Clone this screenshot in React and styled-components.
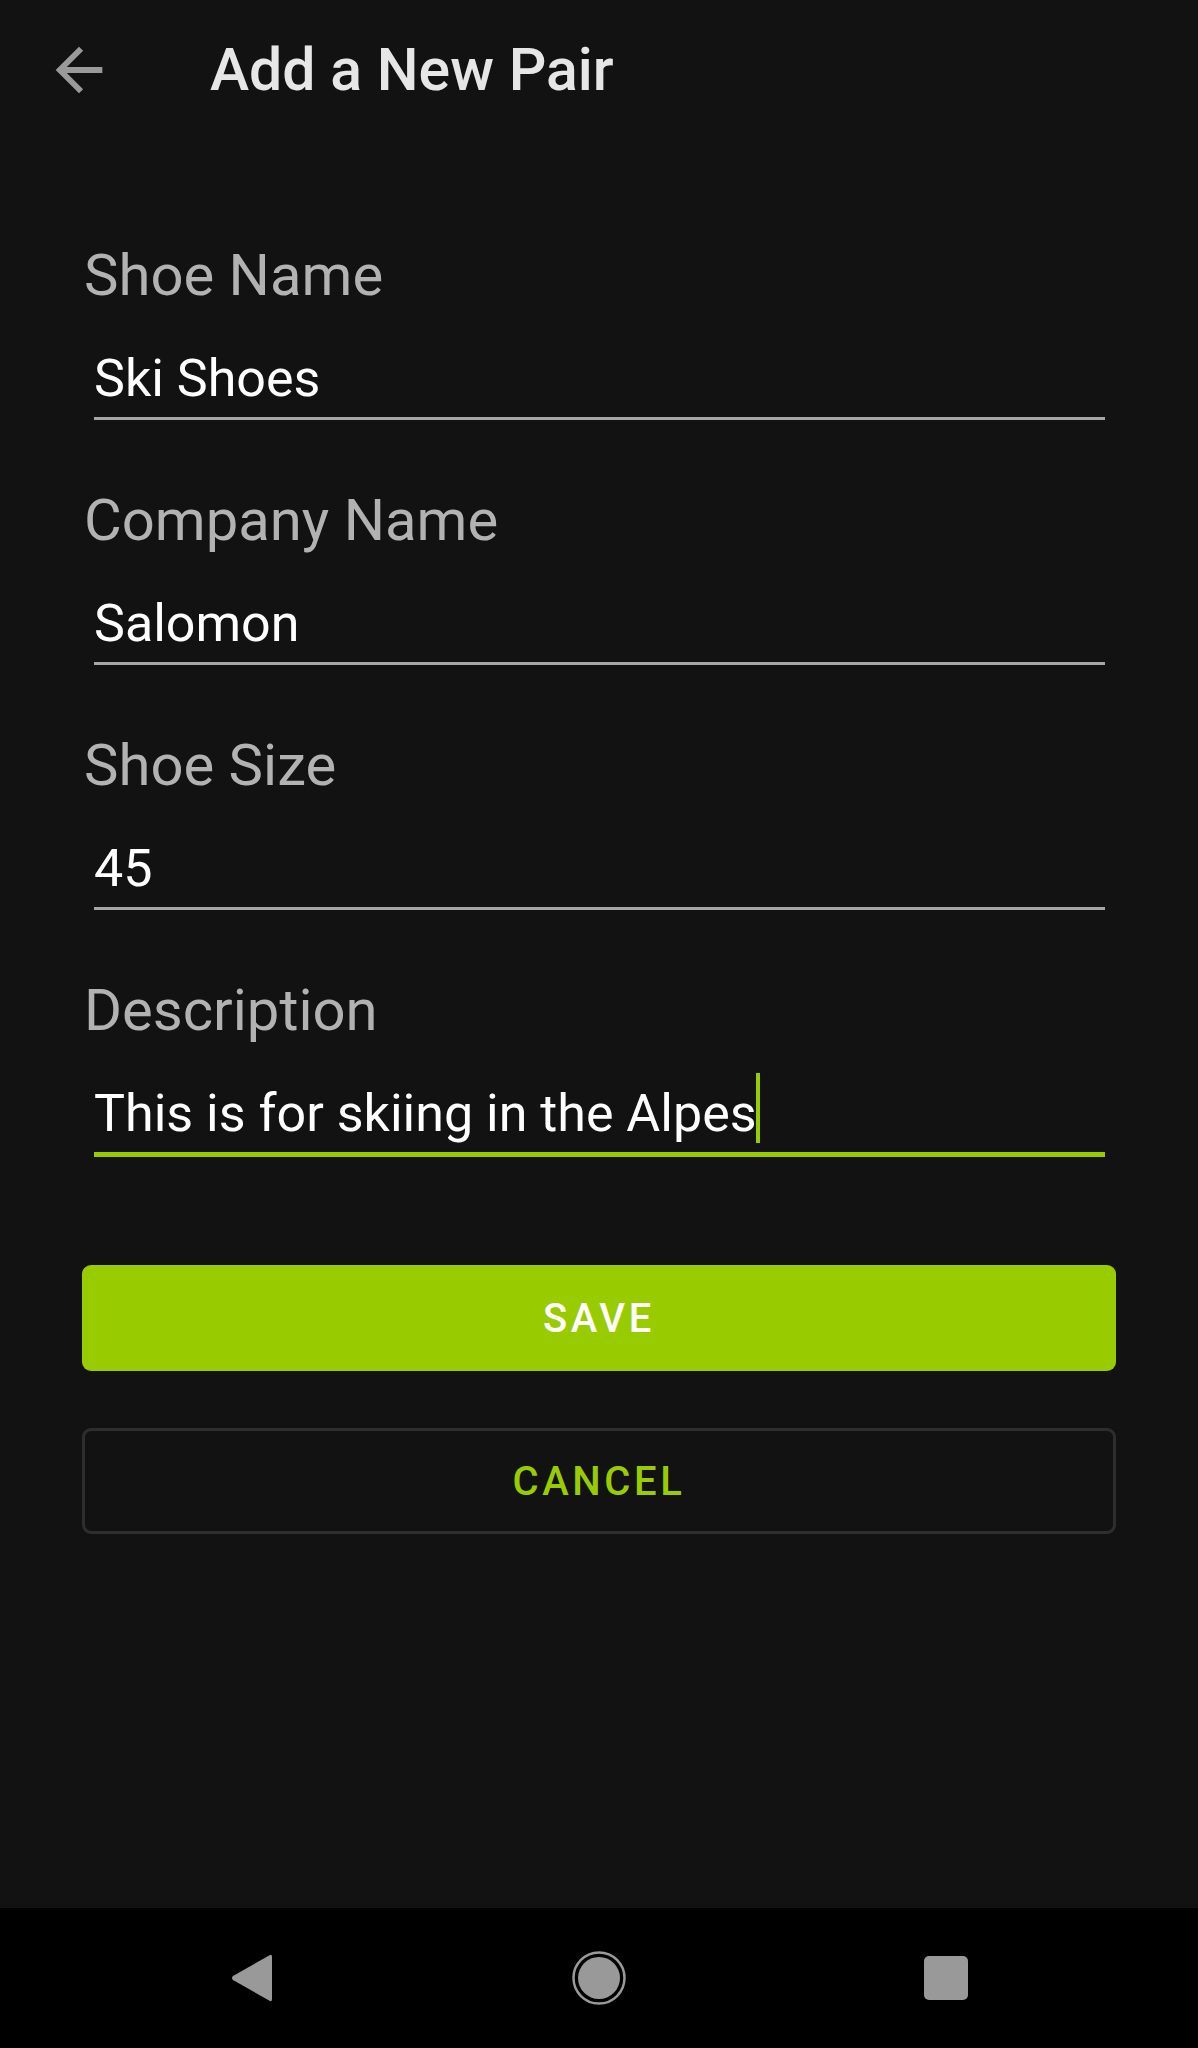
import React from "react";
import styled, { createGlobalStyle } from "styled-components";

const GlobalStyle = createGlobalStyle`
  html, body {
    margin: 0;
    padding: 0;
    background: #121212;
  }
  body {
    font-family: Roboto, "Liberation Sans", sans-serif;
  }
`;

const Screen = styled.div`
  min-height: 100vh;
  display: flex;
  flex-direction: column;
  background: #121212;
`;

const Toolbar = styled.header`
  height: 140px;
  display: flex;
  align-items: center;
  padding-left: 44px;
  gap: 96px;
`;

const BackButton = styled.button`
  width: 70px;
  height: 70px;
  padding: 0;
  border: 0;
  background: none;
  display: flex;
  svg {
    width: 70px;
    height: 70px;
    fill: #9a9a9a;
  }
`;

const Title = styled.h1`
  margin: 0;
  font-size: 59px;
  line-height: 68px;
  font-weight: 500;
  color: #e6e6e6;
`;

const Form = styled.form`
  display: flex;
  flex-direction: column;
  gap: 66px;
  padding: 101px 82px 0 82px;
`;

const Field = styled.div`
  display: flex;
  flex-direction: column;
`;

const Label = styled.label`
  font-size: 58px;
  line-height: 68px;
  color: #b2b2b2;
  margin-left: 2px;
`;

const Value = styled.div`
  margin: 39px 11px 0 12px;
  font-size: 52px;
  line-height: 61px;
  color: #ffffff;
  padding-bottom: 8px;
  border-bottom: ${(p) => (p.$focused ? "5px solid #99cc00" : "3px solid #a6a6a6")};
  white-space: nowrap;
`;

const Caret = styled.span`
  display: inline-block;
  width: 4px;
  height: 70px;
  margin-top: -10px;
  margin-left: -1px;
  vertical-align: -12px;
  background: #99cc00;
`;

const Actions = styled.div`
  display: flex;
  flex-direction: column;
  gap: 57px;
  padding: 108px 82px 0 82px;
`;

const Button = styled.button`
  height: 106px;
  border-radius: 9px;
  font-family: Roboto, "Liberation Sans", sans-serif;
  font-size: 40px;
  font-weight: 500;
  letter-spacing: 3.6px;
  text-transform: uppercase;
  background: ${(p) => (p.$primary ? "#99cc00" : "transparent")};
  color: ${(p) => (p.$primary ? "#ffffff" : "#99cc00")};
  border: ${(p) => (p.$primary ? "0" : "3px solid #2e2e2e")};
`;

const NavBar = styled.nav`
  margin-top: auto;
  height: 140px;
  background: #000;
  display: flex;
  align-items: center;
  justify-content: center;
  gap: 287px;
`;

const NavSlot = styled.div`
  width: 60px;
  height: 60px;
  display: flex;
  align-items: center;
  justify-content: center;
  svg {
    display: block;
  }
`;

function BackArrow() {
  return (
    <svg viewBox="0 0 24 24">
      <path d="M20 11H7.83l5.59-5.59L12 4l-8 8 8 8 1.41-1.41L7.83 13H20v-2z" />
    </svg>
  );
}

export default function App() {
  return (
    <Screen>
      <GlobalStyle />
      <Toolbar>
        <BackButton type="button" aria-label="Back">
          <BackArrow />
        </BackButton>
        <Title>Add a New Pair</Title>
      </Toolbar>

      <Form>
        <Field>
          <Label>Shoe Name</Label>
          <Value>Ski Shoes</Value>
        </Field>
        <Field>
          <Label>Company Name</Label>
          <Value>Salomon</Value>
        </Field>
        <Field>
          <Label>Shoe Size</Label>
          <Value>45</Value>
        </Field>
        <Field>
          <Label>Description</Label>
          <Value $focused>
            This is for skiing in the Alpes
            <Caret />
          </Value>
        </Field>
      </Form>

      <Actions>
        <Button type="button" $primary>Save</Button>
        <Button type="button">Cancel</Button>
      </Actions>

      <NavBar>
        <NavSlot>
          <svg width="44" height="50" viewBox="0 0 44 50">
            <path d="M40 2 Q42 1 42 4 L42 46 Q42 49 40 48 L3 27 Q1 25 3 23 Z" fill="#999" />
          </svg>
        </NavSlot>
        <NavSlot>
          <svg width="56" height="56" viewBox="0 0 56 56">
            <circle cx="28" cy="28" r="25.5" fill="none" stroke="#999" strokeWidth="2.5" />
            <circle cx="28" cy="28" r="21" fill="#999" />
          </svg>
        </NavSlot>
        <NavSlot>
          <svg width="46" height="46" viewBox="0 0 46 46">
            <rect x="1" y="1" width="44" height="44" rx="5" fill="#999" />
          </svg>
        </NavSlot>
      </NavBar>
    </Screen>
  );
}
